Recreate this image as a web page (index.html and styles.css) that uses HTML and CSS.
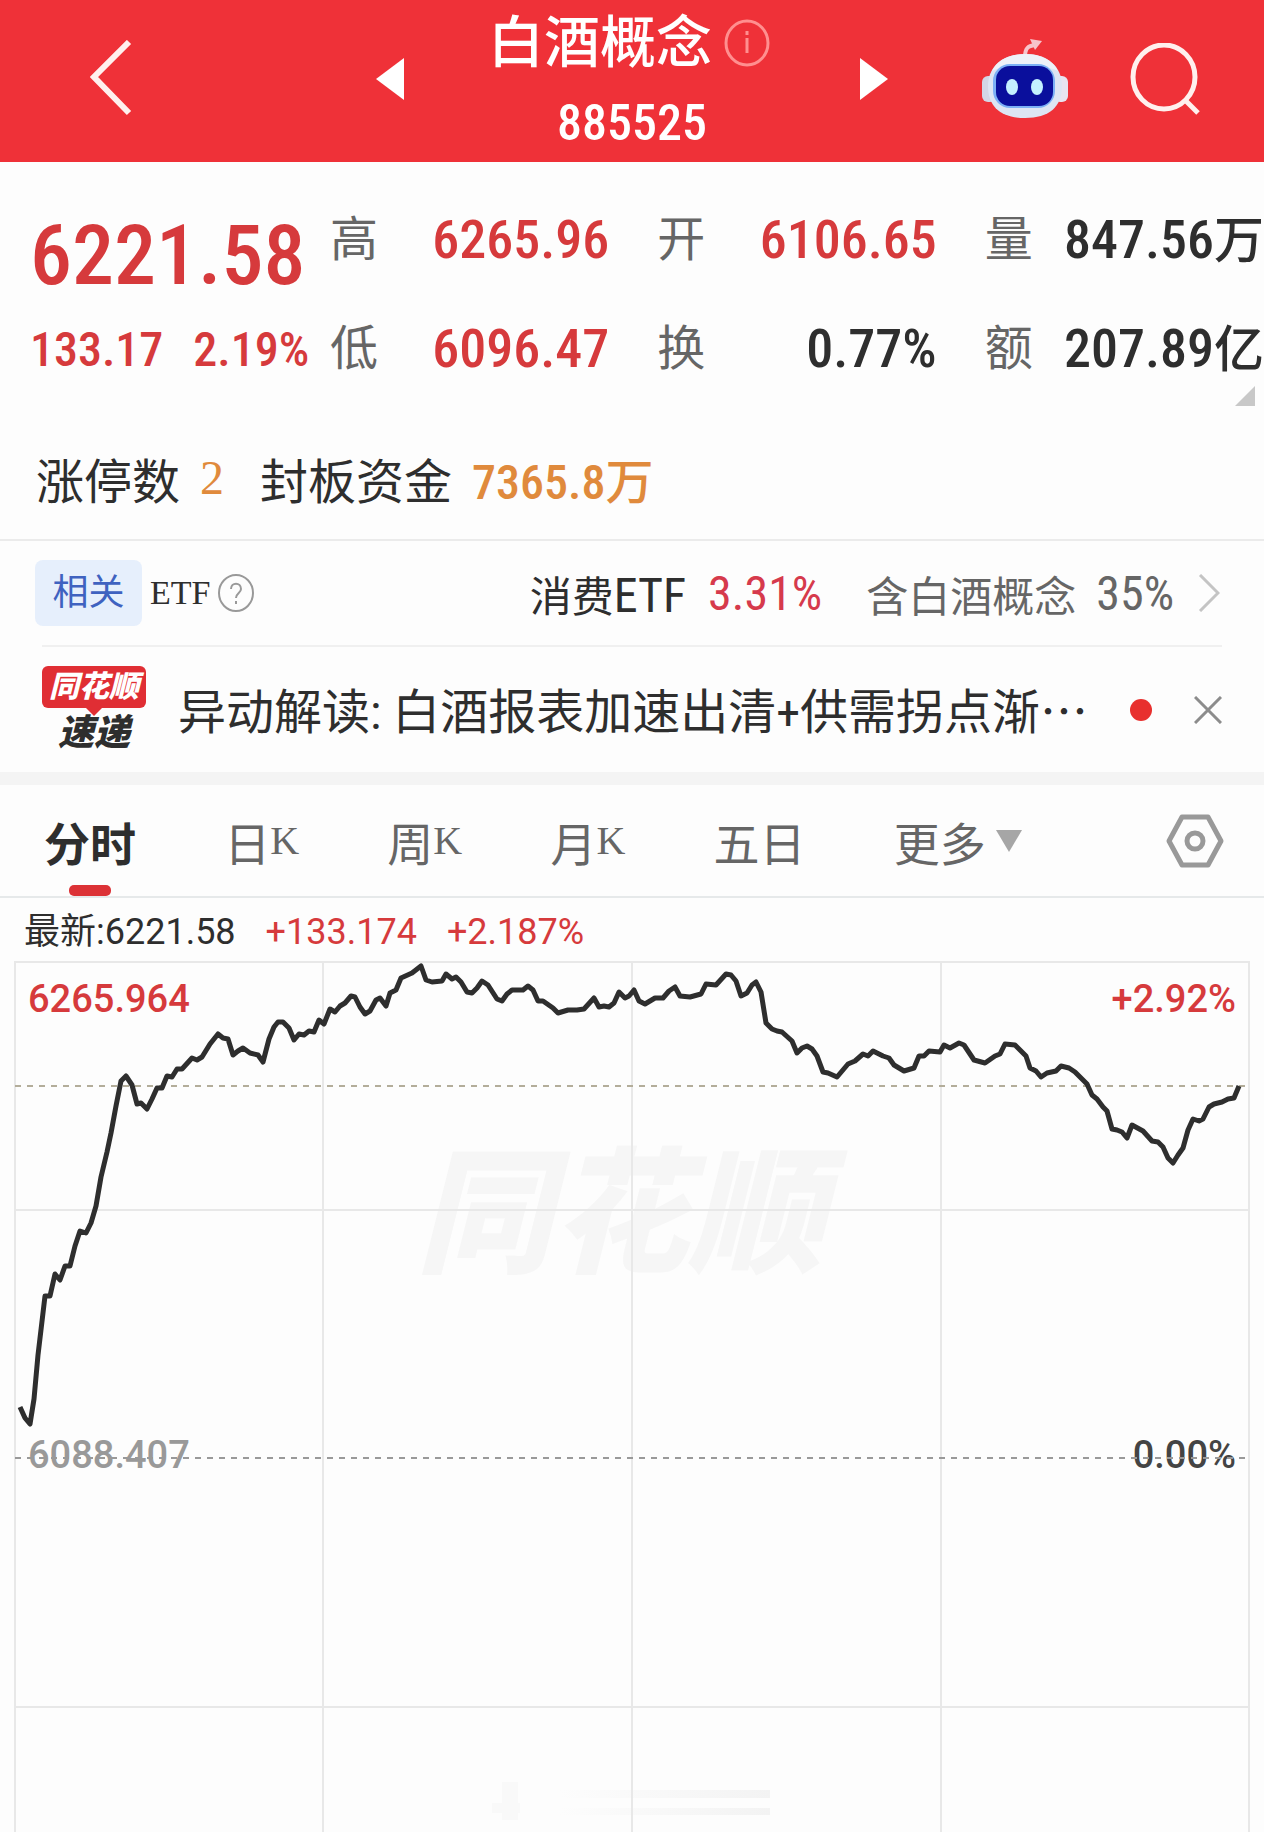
FILE: index.html
```html
<!DOCTYPE html>
<html lang="zh-CN">
<head>
    <meta charset="UTF-8">
    <meta name="viewport" content="width=device-width, initial-scale=1">
    <title>白酒概念 885525</title>
    <link rel="stylesheet" href="styles.css">
</head>
<body>
    <header class="header">
        <div class="header-left">
            <button class="icon-button" aria-label="返回">
                <svg width="44" height="78" viewBox="0 0 44 78"><path d="M39 2 L4 37 L39 73" fill="none" stroke="#fff0ee" stroke-width="6"/></svg>
            </button>
        </div>
        <div class="header-center">
            <button class="icon-button" aria-label="上一个">
                <svg width="28" height="42" viewBox="0 0 28 42"><path d="M28 0 L0 21 L28 42 Z" fill="#fff"/></svg>
            </button>
            <div class="title-box">
                <h1 class="title">白酒概念
                    <svg width="46" height="48" viewBox="0 0 46 48"><ellipse cx="23" cy="24" rx="21" ry="22" fill="none" stroke="#ff8f8f" stroke-width="3"/><path d="M23 19 V34 M23 12 V16" stroke="#ff8f8f" stroke-width="3"/></svg>
                </h1>
                <div class="code">885525</div>
            </div>
            <button class="icon-button" aria-label="下一个">
                <svg width="28" height="42" viewBox="0 0 28 42"><path d="M0 0 L28 21 L0 42 Z" fill="#fff"/></svg>
            </button>
        </div>
        <div class="header-right">
            <button class="icon-button" aria-label="智能助手">
                <svg width="86" height="80" viewBox="0 0 86 80">
                    <path d="M43 18 C43 9 46 7 53 6" fill="none" stroke="#f7c4cb" stroke-width="4"/>
                    <path d="M48 0 L60 2 L53 11 Z" fill="#f7c4cb"/>
                    <rect x="0" y="37" width="14" height="26" rx="6" fill="#d3d6e6"/>
                    <rect x="72" y="37" width="14" height="26" rx="6" fill="#e8e4f0"/>
                    <path d="M43 15 C66 15 80 28 80 47 C80 68 67 79 43 79 C19 79 6 68 6 47 C6 28 20 15 43 15 Z" fill="#dde5f3"/>
                    <path d="M43 15 C59 15 71 21 76 32 C60 24 26 24 10 32 C15 21 27 15 43 15 Z" fill="#eef1f8"/>
                    <rect x="11" y="25" width="62" height="44" rx="17" fill="#7cb0f5"/>
                    <rect x="14" y="27" width="57" height="40" rx="14" fill="#0a0f9c"/>
                    <ellipse cx="30" cy="48" rx="6" ry="8" fill="#c4f1ff"/>
                    <ellipse cx="55" cy="48" rx="6" ry="8" fill="#c4f1ff"/>
                </svg>
            </button>
            <button class="icon-button" aria-label="搜索">
                <svg width="70" height="72" viewBox="0 0 70 72"><ellipse cx="34" cy="34" rx="31" ry="32" fill="none" stroke="#fff0ee" stroke-width="5"/><path d="M55 57 L68 70" stroke="#fff0ee" stroke-width="5"/></svg>
            </button>
        </div>
    </header>

    <section class="quote">
        <div class="price-box">
            <div class="price">6221.58</div>
            <div class="change"><span>133.17</span><span>2.19%</span></div>
        </div>
        <dl class="stats">
            <div class="stat"><dt>高</dt><dd class="up">6265.96</dd></div>
            <div class="stat"><dt>开</dt><dd class="up">6106.65</dd></div>
            <div class="stat"><dt>量</dt><dd>847.56<span>万</span></dd></div>
            <div class="stat"><dt>低</dt><dd class="up">6096.47</dd></div>
            <div class="stat"><dt>换</dt><dd>0.77%</dd></div>
            <div class="stat"><dt>额</dt><dd>207.89<span>亿</span></dd></div>
        </dl>
        <svg class="corner" width="20" height="20" viewBox="0 0 20 20"><path d="M20 0 V20 H0 Z" fill="#c8c8c8"/></svg>
    </section>

    <section class="limit">
        <span>涨停数</span>
        <span class="limit-count">2</span>
        <span>封板资金</span>
        <span class="limit-money">7365.8万</span>
    </section>

    <a class="etf" href="#">
        <span class="tag">相关</span>
        <span class="etf-word">ETF</span>
        <svg width="36" height="38" viewBox="0 0 36 38"><ellipse cx="18" cy="19" rx="17" ry="18" fill="none" stroke="#999" stroke-width="2"/><path d="M13 15 C13 8 23 8 23 15 C23 19 18 19 18 24 M18 27 V30" fill="none" stroke="#999" stroke-width="2"/></svg>
        <span class="etf-name">消费<span class="number">ETF</span></span>
        <span class="etf-rate number">3.31%</span>
        <span class="etf-hold">含白酒概念</span>
        <span class="etf-part number">35%</span>
        <svg width="22" height="38" viewBox="0 0 22 38"><path d="M2 1 L20 19 L2 37" fill="none" stroke="#c4c4c4" stroke-width="3"/></svg>
    </a>

    <section class="news">
        <div class="news-logo">
            <span class="logo-top">同花顺</span>
            <span class="logo-bottom">速递</span>
        </div>
        <a class="news-text" href="#">异动解读: 白酒报表加速出清+供需拐点渐⋯</a>
        <span class="dot"></span>
        <button class="icon-button" aria-label="关闭">
            <svg width="28" height="28" viewBox="0 0 28 28"><path d="M1 1 L27 27 M27 1 L1 27" stroke="#8c8c8c" stroke-width="3"/></svg>
        </button>
    </section>

    <nav class="tabs">
        <button class="tab active">分时</button>
        <button class="tab">日<span>K</span></button>
        <button class="tab">周<span>K</span></button>
        <button class="tab">月<span>K</span></button>
        <button class="tab">五日</button>
        <button class="tab">更多
            <svg class="more" width="26" height="22" viewBox="0 0 26 22"><path d="M0 0 H26 L13 22 Z" fill="#a6a6a6"/></svg>
        </button>
        <button class="icon-button settings" aria-label="设置">
            <svg width="58" height="54" viewBox="0 0 58 54"><path d="M16 3 H42 L55 27 L42 51 H16 L3 27 Z" fill="none" stroke="#999" stroke-width="5" stroke-linejoin="round"/><circle cx="29" cy="27" r="8" fill="none" stroke="#999" stroke-width="5"/></svg>
        </button>
    </nav>

    <div class="latest">
        <span>最新:6221.58</span>
        <span class="up">+133.174</span>
        <span class="up">+2.187%</span>
    </div>

    <svg class="chart" viewBox="0 956 1264 876" role="img" aria-label="分时走势">
        <defs>
            <linearGradient id="fade">
                <stop offset="0" stop-color="#fdfdfd"/>
                <stop offset="1" stop-color="#f3f3f3"/>
            </linearGradient>
        </defs>
        <text class="watermark" x="416" y="1262">同花顺</text>
        <g class="smudge">
            <rect x="492" y="1803" width="28" height="10"/>
            <rect x="502" y="1782" width="16" height="38"/>
            <rect x="560" y="1790" width="210" height="8" fill="url(#fade)"/>
            <rect x="560" y="1808" width="210" height="7" fill="url(#fade)"/>
        </g>
        <g class="grid">
            <path d="M15 1832 V962 H1249 V1832"/>
            <path d="M323 962 V1832 M632 962 V1832 M941 962 V1832"/>
            <path d="M15 1210 H1249 M15 1707 H1249"/>
        </g>
        <path class="dashed" d="M15 1086 H1245"/>
        <text class="axis up" x="28" y="1012">6265.964</text>
        <text class="axis up end" x="1236" y="1012">+2.92%</text>
        <text class="axis muted" x="28" y="1468">6088.407</text>
        <text class="axis end" x="1236" y="1468">0.00%</text>
        <path class="dashed zero" d="M15 1458 H1245"/>
        <polyline class="line" points="
            20,1407 25,1418 30,1424 34,1399 38,1355 45,1296 50,1296 55,1274 60,1280 65,1266
            70,1266 75,1246 80,1231 86,1233 91,1223 96,1206 101,1177 107,1152 111,1133 116,1106
            121,1081 126,1076 132,1085 137,1104 141,1103 147,1109 152,1099 157,1088 162,1088 167,1076
            172,1077 177,1069 182,1069 192,1058 197,1060 202,1057 210,1044 218,1034 223,1038 228,1039
            233,1055 238,1051 243,1048 250,1053 258,1055 263,1062 269,1039 274,1027 278,1022 283,1022
            289,1028 294,1040 299,1034 304,1035 309,1031 314,1032 319,1020 324,1024 330,1009 335,1012
            340,1006 345,1003 351,996 355,997 360,1007 365,1014 370,1011 376,1000 380,998 386,1006
            390,993 396,990 401,978 412,973 421,966 426,980 432,982 442,981 446,974 452,979
            456,977 461,982 467,992 472,993 477,988 482,981 488,985 497,999 502,1001 507,994
            512,990 523,990 528,986 533,990 538,1001 543,1001 553,1008 558,1013 568,1010 577,1010
            584,1009 594,998 599,1007 604,1006 609,1007 614,1003 619,992 625,998 629,996 634,990
            639,1001 645,1004 655,998 663,998 669,991 675,987 680,996 690,997 701,994 706,984
            716,985 726,974 731,975 736,981 741,996 747,993 752,985 756,982 761,992 766,1023
            772,1029 777,1031 782,1032 792,1041 797,1053 802,1048 807,1046 812,1049 817,1056 823,1072
            828,1073 837,1077 848,1064 855,1061 863,1054 868,1056 873,1051 883,1056 889,1058 894,1065
            904,1071 914,1068 919,1056 924,1056 929,1051 940,1052 944,1045 950,1048 959,1043 964,1045
            974,1060 985,1063 995,1056 1000,1054 1005,1044 1015,1045 1020,1050 1026,1056 1030,1068 1036,1071
            1041,1077 1047,1073 1056,1071 1061,1066 1069,1068 1075,1072 1082,1079 1087,1084 1092,1095 1097,1099
            1103,1107 1107,1111 1112,1129 1117,1130 1122,1132 1127,1138 1132,1125 1143,1131 1152,1141 1158,1142
            1163,1147 1168,1158 1173,1163 1178,1155 1183,1148 1188,1130 1193,1119 1199,1121 1203,1119 1209,1107
            1214,1104 1222,1102 1228,1099 1234,1098 1239,1086"/>
    </svg>
</body>
</html>
```

FILE: styles.css
```css
* {
    box-sizing: border-box;
}
body {
    margin: 0;
    background-color: #fdfdfd;
    color: #2e2e2e;
    font-family: "Roboto Condensed", Roboto, "Noto Sans CJK SC", sans-serif;
    font-size: 48px;
    overflow-x: hidden;
}
button {
    margin: 0;
    padding: 0;
    border: none;
    background: none;
    color: inherit;
    font: inherit;
    cursor: pointer;
}
a {
    color: inherit;
    text-decoration: none;
}
svg {
    display: block;
    flex-shrink: 0;
}
.icon-button {
    flex-shrink: 0;
}
.up {
    color: #d63a3c;
}

/* Header */
.header {
    display: grid;
    grid-template-columns: 1fr 512px 1fr;
    align-items: center;
    height: 162px;
    padding-bottom: 4px;
    background-color: #ef3138;
    color: #fff;
}
.header-left {
    display: flex;
    padding-left: 90px;
}
.header-center {
    display: flex;
    align-items: center;
    justify-content: space-between;
}
.header-right {
    display: flex;
    align-items: center;
    justify-content: flex-end;
    gap: 62px;
    padding-right: 64px;
}
.title-box {
    text-align: center;
}
.title {
    display: flex;
    align-items: center;
    gap: 12px;
    margin: 0 0 24px;
    padding-right: 6px;
    font-size: 56px;
    font-weight: 500;
    line-height: 64px;
}
.code {
    font-size: 50px;
    font-weight: 500;
    line-height: 48px;
}

/* Quote */
.quote {
    display: flex;
    position: relative;
    padding: 48px 0 48px 30px;
}
.price-box {
    flex: 0 0 300px;
    color: #d63a3c;
}
.price {
    font-size: 84px;
    font-weight: 500;
    line-height: 92px;
}
.change {
    display: flex;
    gap: 30px;
    margin-top: 18px;
    font-weight: 500;
    line-height: 60px;
}
.stats {
    display: grid;
    flex: 1;
    grid-template-columns: repeat(3, 1fr);
    gap: 48px;
    margin: 0;
    line-height: 60px;
}
.stat {
    display: flex;
    justify-content: space-between;
    height: 60px;
    white-space: nowrap;
}
.stat dt {
    color: #666;
}
.stat dd {
    margin: 0;
    font-size: 54px;
    font-weight: 500;
}
.stat dd span {
    font-size: 50px;
}
.corner {
    position: absolute;
    right: 9px;
    bottom: 22px;
}

/* Limit up */
.limit {
    display: flex;
    align-items: center;
    height: 113px;
    padding: 0 36px 12px;
    border-bottom: 2px solid #ebebeb;
}
.limit-count {
    margin: 0 36px 0 20px;
    color: #e08a3c;
    font-family: "Liberation Serif", serif;
}
.limit-money {
    margin-left: 20px;
    color: #e08a3c;
    font-weight: 500;
}

/* ETF */
.etf {
    display: flex;
    align-items: center;
    height: 104px;
    padding: 0 44px 0 35px;
    font-size: 42px;
    white-space: nowrap;
}
.tag {
    width: 107px;
    margin-right: 8px;
    border-radius: 8px;
    background-color: #e6effc;
    color: #3f62c0;
    font-size: 36px;
    line-height: 66px;
    text-align: center;
}
.etf-word {
    margin-right: 8px;
    font-family: "Liberation Serif", serif;
    font-size: 34px;
}
.number {
    font-size: 48px;
}
.etf-name {
    margin-left: auto;
}
.etf-rate {
    margin: 0 44px 0 22px;
    color: #d63a4c;
}
.etf-hold,
.etf-part {
    color: #666;
}
.etf-part {
    margin: 0 24px 0 20px;
}

/* News */
.news {
    display: flex;
    align-items: center;
    height: 127px;
    margin: 0 42px;
    border-top: 2px solid #f0f0f0;
}
.news-logo {
    flex: 0 0 104px;
    font-weight: 900;
    text-align: center;
}
.logo-top,
.logo-bottom {
    display: block;
    font-size: 30px;
    font-style: italic;
    line-height: 42px;
}
.logo-top {
    position: relative;
    border-radius: 6px;
    background-color: #e02e34;
    color: #fff;
}
.logo-top::after {
    content: "";
    position: absolute;
    top: 42px;
    left: 44px;
    border: 8px solid transparent;
    border-top-color: #e02e34;
    border-bottom: none;
}
.logo-bottom {
    margin-top: 4px;
    font-size: 36px;
}
.news-text {
    flex: 1;
    margin-left: 32px;
    padding-bottom: 4px;
    white-space: nowrap;
}
.dot {
    width: 22px;
    height: 22px;
    margin-right: 42px;
    border-radius: 50%;
    background-color: #e8302e;
}

/* Tabs */
.tabs {
    display: flex;
    align-items: center;
    justify-content: space-between;
    height: 126px;
    padding: 0 40px 0 44px;
    border-top: 13px solid #f4f4f4;
    border-bottom: 2px solid #e6e9ea;
    color: #666;
    font-size: 46px;
}
.tab {
    display: flex;
    position: relative;
    align-items: center;
}
.tab span {
    font-family: "Liberation Serif", serif;
    font-size: 40px;
}
.tab.active {
    color: #2e2e2e;
    font-weight: bold;
}
.tab.active::after {
    content: "";
    position: absolute;
    bottom: -22px;
    left: 25px;
    width: 42px;
    height: 11px;
    border-radius: 5px;
    background-color: #dc3236;
}
.more {
    margin-left: 10px;
}
.settings {
    margin-left: 56px;
}

/* Chart */
.latest {
    display: flex;
    gap: 30px;
    height: 58px;
    padding: 8px 24px 0;
    font-family: Roboto, "Noto Sans CJK SC", sans-serif;
    font-size: 36px;
    line-height: 52px;
}
.chart {
    width: 100%;
    height: auto;
}
.grid path {
    fill: none;
    stroke: #e8e8e8;
    stroke-width: 2;
}
.dashed {
    stroke: #b3ad9a;
    stroke-width: 2;
    stroke-dasharray: 6 6;
}
.zero {
    stroke: #999;
}
.line {
    fill: none;
    stroke: #2e2e2e;
    stroke-width: 5;
    stroke-linejoin: round;
}
.axis {
    fill: #444;
    font-family: Roboto, sans-serif;
    font-size: 38px;
    font-weight: 500;
}
.axis.up {
    fill: #d63a3c;
}
.axis.muted {
    fill: #999;
}
.axis.end {
    text-anchor: end;
}
.watermark {
    fill: #f6f6f6;
    font-size: 136px;
    font-style: italic;
    font-weight: 900;
}
.smudge {
    fill: #f9f9f9;
}
```
